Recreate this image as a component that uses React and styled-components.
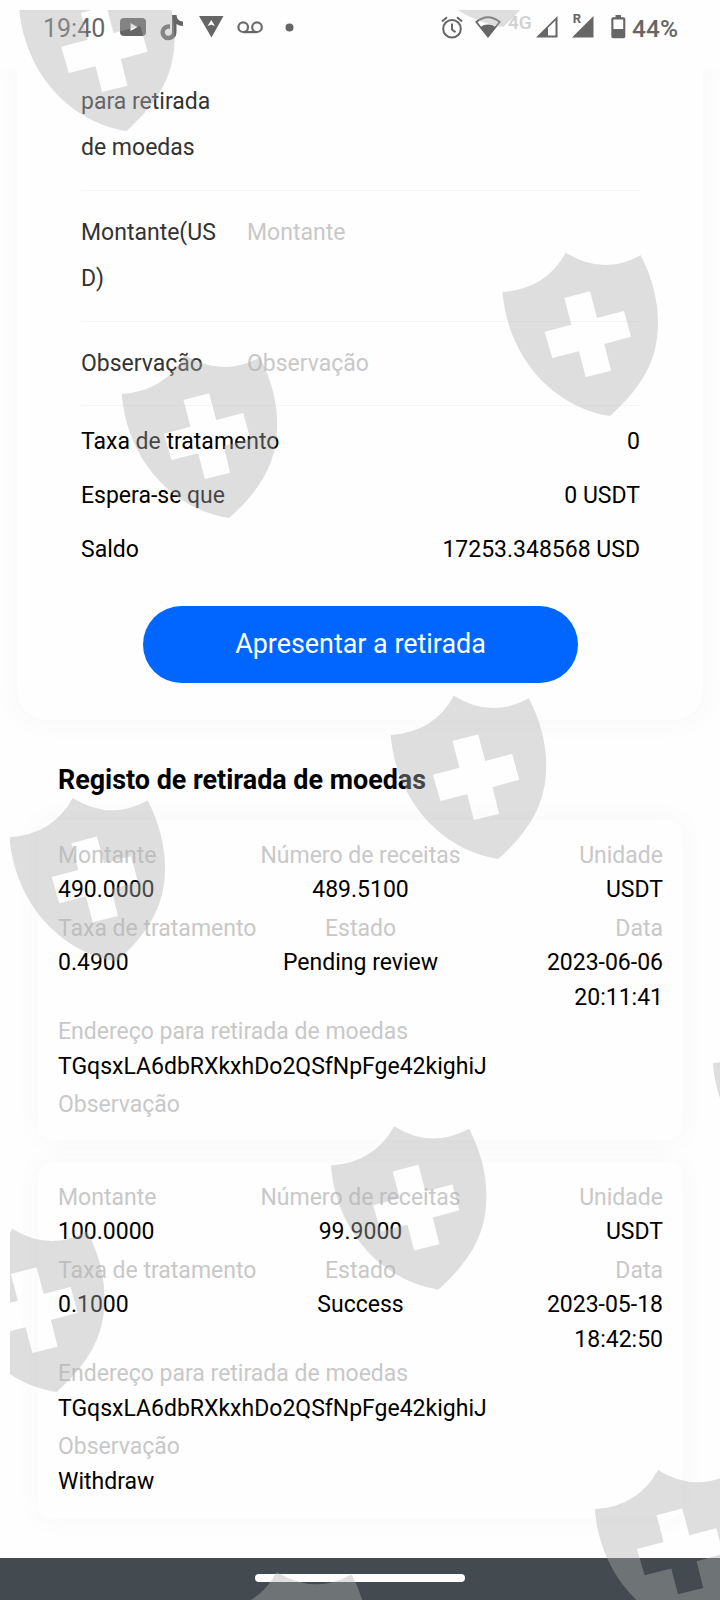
import React from 'react';
import styled, { createGlobalStyle } from 'styled-components';

const GlobalStyle = createGlobalStyle`
	* {
		box-sizing: border-box;
	}

	body {
		margin: 0;
		background-color: #fefefe;
		font-family: Roboto, "Liberation Sans", sans-serif;
	}
`;

const records = [
	{
		amount: '490.0000',
		received: '489.5100',
		unit: 'USDT',
		fee: '0.4900',
		status: 'Pending review',
		date: '2023-06-06',
		time: '20:11:41',
		address: 'TGqsxLA6dbRXkxhDo2QSfNpFge42kighiJ',
		note: '',
	},
	{
		amount: '100.0000',
		received: '99.9000',
		unit: 'USDT',
		fee: '0.1000',
		status: 'Success',
		date: '2023-05-18',
		time: '18:42:50',
		address: 'TGqsxLA6dbRXkxhDo2QSfNpFge42kighiJ',
		note: 'Withdraw',
	},
];

const shields = [
	[18.5, -33],
	[395, -137],
	[502, 252],
	[121.2, 354],
	[390.2, 695],
	[9, 797.3],
	[330.4, 1125.5],
	[-51.4, 1228],
	[712.4, 1023],
	[594.3, 1469.2],
	[213, 1571.3],
];

const SHIELD = 'M63.7 .7Q101 24 138.7 3.3Q156 37 156 71C156 110 138 137 108 164C54 156 6 108 .5 40Q44 37 63.7 .7Z'
	+ 'M62.3 46L69.3 72.7L42.7 79.7L50.3 106L77 99.3L83.7 125L109 118.7L102.3 92L129 84.7L122 59L95 66L88 39.3Z';

const StatusIcons = () => (
	<>
		<Clock>19:40</Clock>
		<Icon width="27" height="19" $left={15}>
			<path fillRule="evenodd" d="M4 0H22Q26 0 26 4V14Q26 18 22 18H4Q0 18 0 14V4Q0 0 4 0ZM10.5 5V13L17.5 9Z" />
		</Icon>
		<Icon width="24" height="27" $left={13}>
			<path d="M12 1H16.5Q17 7 23 7.5V12Q19 12 16.5 10V18.5A8 8 0 1 1 10 10.5V15A3.6 3.6 0 1 0 12 18.5Z" />
		</Icon>
		<Icon width="25" height="22" $left={15}>
			<path fillRule="evenodd" d="M0 0H24.5L12.5 21.5ZM12.3 4L8.5 10L12.3 8.8L16 10Z" />
		</Icon>
		<Icon width="27" height="13" $left={13}>
			<circle cx="6.2" cy="6.2" r="4.8" fill="none" stroke="#6c6c6c" strokeWidth="2.2" />
			<circle cx="20" cy="6.2" r="4.8" fill="none" stroke="#6c6c6c" strokeWidth="2.2" />
			<path d="M6 10H20V12.2H6Z" />
		</Icon>
		<Icon width="9" height="9" $left={20.5}>
			<circle cx="4.5" cy="4.5" r="4" />
		</Icon>
		<Spacer />
		<Icon width="22" height="23" $left={0}>
			<circle cx="11" cy="12.8" r="8.8" fill="none" stroke="#666" strokeWidth="2" />
			<path d="M11 7.5V13.5L14.5 16.3M1 5.5L6 1.3M16 1.3L21 5.5" fill="none" stroke="#666" strokeWidth="2" />
		</Icon>
		<Icon width="26" height="22" $left={12}>
			<path d="M1.3 6Q13 -3.5 24.7 6L13 20.5Z" fill="none" stroke="#666" strokeWidth="1.8" />
			<path d="M5.5 11.5Q7.5 8.5 13 8.5Q18.5 8.5 20.5 11.5L13 21Z" />
		</Icon>
		<Network>4G</Network>
		<Icon width="22" height="22" $left={4}>
			<path fillRule="evenodd" d="M0 21.5L21.5 0V21.5ZM12 11.8V19.5H19.5V4.5Z" />
		</Icon>
		<Roaming>R</Roaming>
		<Icon width="22" height="22" $left={-9}>
			<path d="M0 21.5L21.5 0V21.5Z" />
		</Icon>
		<Icon width="15" height="24" $left={17}>
			<path fillRule="evenodd" d="M4.5 0H10V2.3H12.5Q14.3 2.3 14.3 4V21.5Q14.3 23.2 12.5 23.2H2Q.3 23.2 .3 21.5V4Q.3 2.3 2 2.3H4.5ZM2.4 4.6V14H12.2V4.6Z" />
		</Icon>
		<Battery>44%</Battery>
	</>
);

const Record = ({ record }) => (
	<RecordCard>
		<Columns>
			<Cell><Label>Montante</Label>{record.amount}</Cell>
			<Cell $align="center"><Label>Número de receitas</Label>{record.received}</Cell>
			<Cell $align="right"><Label>Unidade</Label>{record.unit}</Cell>
		</Columns>
		<Columns>
			<Cell><Label>Taxa de tratamento</Label>{record.fee}</Cell>
			<Cell $align="center"><Label>Estado</Label>{record.status}</Cell>
			<Cell $align="right"><Label>Data</Label>{record.date}<br />{record.time}</Cell>
		</Columns>
		<Cell><Label>Endereço para retirada de moedas</Label>{record.address}</Cell>
		<Cell><Label>Observação</Label>{record.note}</Cell>
	</RecordCard>
);

const App = () => {
	return (
		<Screen>
			<GlobalStyle />

			<StatusBar>
				<StatusIcons />
			</StatusBar>

			<Content>
				<FormCard>
					<Field $height={121.5} $bottom={10}>
						<FieldLabel>para retirada<br />de moedas</FieldLabel>
					</Field>
					<Field $height={131} $bottom={1}>
						<FieldLabel>Montante(US<br />D)</FieldLabel>
						<Placeholder>Montante</Placeholder>
					</Field>
					<Field $height={84} $bottom={0}>
						<FieldLabel>Observação</FieldLabel>
						<Placeholder>Observação</Placeholder>
					</Field>

					<Summary>
						<SummaryRow><span>Taxa de tratamento</span><span>0</span></SummaryRow>
						<SummaryRow><span>Espera-se que</span><span>0 USDT</span></SummaryRow>
						<SummaryRow><span>Saldo</span><span>17253.348568 USD</span></SummaryRow>
					</Summary>

					<Submit>Apresentar a retirada</Submit>
				</FormCard>

				<Title>Registo de retirada de moedas</Title>

				<RecordList>
					{
						records.map((record, index) => <Record record={record} key={index} />)
					}
				</RecordList>
			</Content>

			<NavBar>
				<HomeHandle />
			</NavBar>

			<Watermark width="720" height="1600">
				<clipPath id="inset"><rect x="10" y="10" width="710" height="1590" /></clipPath>
				<g clipPath="url(#inset)">
					{
						shields.map(([x, y], index) => (
							<path d={SHIELD} transform={`translate(${x} ${y})`} fillRule="evenodd" key={index} />
						))
					}
				</g>
			</Watermark>
		</Screen>
	);
}


const Screen = styled.div`
	position: relative;
	display: flex;
	flex-direction: column;

	width: 720px;
	height: 1600px;
	overflow: hidden;

	font-size: 23px;
	color: #000;
`;

const StatusBar = styled.div`
	display: flex;
	align-items: center;
	flex: none;

	height: 69px;
	padding: 0 42px 15px 43px;

	color: #666;
	background-color: #fefefe;
	z-index: 1;
`;

const Icon = styled.svg`
	flex: none;
	margin-left: ${props => props.$left}px;
	fill: #666;
`;

const Clock = styled.span`
	padding-top: 3px;

	font-size: 25px;
	color: #666;
`;

const Spacer = styled.div`
	flex: 1;
`;

const Network = styled.span`
	margin: -10px 0 0 7px;

	font-size: 19px;
	font-weight: 500;
	color: #d0d0d0;
`;

const Roaming = styled.span`
	margin: -18px 0 0 15px;

	font-size: 13px;
	font-weight: 700;
`;

const Battery = styled.span`
	margin-left: 6px;
	padding-top: 3px;

	font-size: 24.5px;
	font-weight: 500;
`;

const Content = styled.div`
	flex: 1;
	padding: 0 17px;
`;

const FormCard = styled.div`
	height: 651px;
	padding: 0 63px 0 64px;

	background-color: #fefefe;
	border-radius: 0 0 30px 30px;
	box-shadow: 0 0 24px 8px rgba(0, 0, 0, 0.018);
`;

const Field = styled.div`
	display: flex;
	align-items: center;

	height: ${props => props.$height}px;
	padding-top: 1px;
	padding-bottom: ${props => props.$bottom}px;

	line-height: 46px;
	border-bottom: 1px solid #f5f5f5;
`;

const FieldLabel = styled.div`
	width: 166px;
	color: #333;
`;

const Placeholder = styled.div`
	align-self: flex-start;
	margin-top: 18px;
	color: #c8c8c8;
`;

const Summary = styled.div`
	padding-top: 9.5px;
`;

const SummaryRow = styled.div`
	display: flex;
	justify-content: space-between;
	line-height: 54px;
`;

const Submit = styled.button`
	display: block;

	width: 435px;
	height: 77px;
	margin: 28.5px auto 0;
	padding: 0;

	font-family: inherit;
	font-size: 26.9px;
	color: #fff;

	background-color: #0066ff;
	border: none;
	border-radius: 39px;
`;

const Title = styled.h2`
	height: 100px;
	margin: 0;
	padding: 0 41px;

	font-size: 26.9px;
	font-weight: 700;
	line-height: 120px;
`;

const RecordList = styled.div`
	display: flex;
	flex-direction: column;
	gap: 22px;

	padding: 0 20px 0 21px;
`;

const RecordCard = styled.div`
	padding: 18.5px 20px 17.5px;

	line-height: 34.5px;

	background-color: #fefefe;
	border-radius: 16px;
	box-shadow: 0 0 24px 6px rgba(0, 0, 0, 0.018);

	> :not(:last-child) {
		min-height: 73px;
	}

	&:last-child {
		padding-bottom: 20px;
	}
`;

const Columns = styled.div`
	display: grid;
	grid-template-columns: repeat(3, 1fr);
`;

const Cell = styled.div`
	text-align: ${props => props.$align || 'left'};
	white-space: nowrap;
`;

const Label = styled.div`
	color: #c8c8c8;
`;

const NavBar = styled.div`
	display: flex;
	align-items: center;
	justify-content: center;
	flex: none;

	height: 42px;
	padding-bottom: 2px;

	background-color: #444b50;
	z-index: 1;
`;

const HomeHandle = styled.div`
	width: 210px;
	height: 8px;

	background-color: #fff;
	border-radius: 4px;
`;

const Watermark = styled.svg`
	position: absolute;
	top: 0;
	left: 0;
	z-index: 2;

	fill: rgba(175, 175, 175, 0.4);
	pointer-events: none;
`;

export default App;
